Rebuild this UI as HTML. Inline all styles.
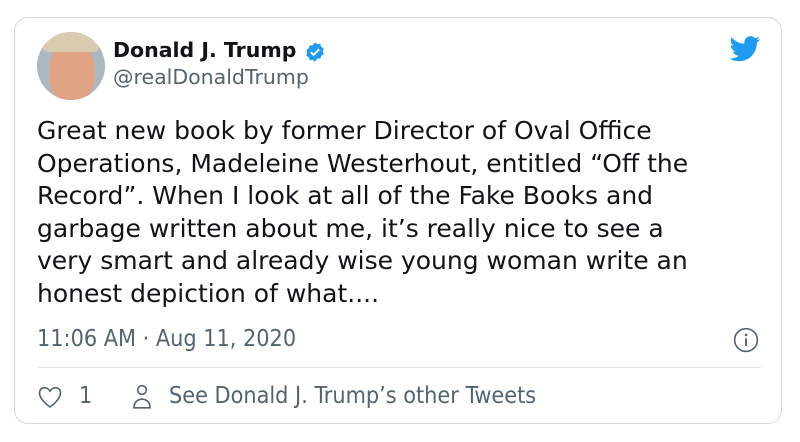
<!DOCTYPE html>
<html><head><style>
body{margin:0;width:800px;height:442px;background:#fff;font-family:"DejaVu Sans","Liberation Sans",sans-serif;position:relative;overflow:hidden}
.card{position:absolute;left:14px;top:17px;width:768px;height:407px;border:1px solid #cfd9de;border-radius:14px;box-sizing:border-box}
.av{position:absolute;left:37px;top:32px;width:68px;height:68px;border-radius:50%;overflow:hidden;background:#aab8c2}
.face{position:absolute;left:12px;top:10px;width:46px;height:62px;border-radius:45%;background:#e0a383}
.hair{position:absolute;left:6px;top:0;width:56px;height:20px;border-radius:20px 30px 10px 10px;background:#d9cbb0}
.name{position:absolute;left:113px;top:38px;font-weight:bold;font-size:20.5px;color:#0f1419}
.handle{position:absolute;left:113px;top:65px;font-size:20.5px;color:#536471}
.text{position:absolute;left:37px;top:115px;font-size:25px;line-height:32.5px;color:#0f1419;width:760px;white-space:nowrap}
.cond{font-family:"DejaVu Sans Condensed","DejaVu Sans",sans-serif}
.time{position:absolute;left:37px;top:325px;font-size:23.2px;color:#536471}
.hr{position:absolute;left:37px;top:367px;width:724px;height:1px;background:#dfe4e7}
.foot{position:absolute;top:382px;font-size:23.2px;color:#536471}
</style></head><body>
<div class="card"></div>
<div class="av"><div class="face"></div><div class="hair"></div></div>
<div class="name">Donald J. Trump</div>
<svg style="position:absolute;left:304px;top:41px" width="22" height="22" viewBox="0 0 24 24"><path fill="#1d9bf0" d="M12 1.5l2.6 1.9 3.2-.2 1 3.1 2.7 1.8-1 3.1 1 3.1-2.7 1.8-1 3.1-3.2-.2L12 22.5l-2.6-1.9-3.2.2-1-3.1-2.7-1.8 1-3.1-1-3.1 2.7-1.8 1-3.1 3.2.2z"/><path d="M7.5 12.2l3 3 6-6.2" stroke="#fff" stroke-width="2.2" fill="none"/></svg>
<div class="handle">@realDonaldTrump</div>
<svg style="position:absolute;left:729px;top:36px" width="32" height="26" viewBox="0 0 24 20"><path fill="#1d9bf0" d="M23.6 2.4c-.9.4-1.8.6-2.8.8 1-.6 1.8-1.6 2.1-2.7-.9.6-2 1-3.1 1.2C18.9.7 17.6.1 16.3.1c-2.7 0-4.8 2.2-4.8 4.8 0 .4 0 .8.1 1.1C7.5 5.8 4 3.9 1.6 1 1.2 1.7 1 2.6 1 3.5c0 1.7.9 3.2 2.2 4-.8 0-1.5-.2-2.2-.6v.1c0 2.3 1.7 4.3 3.9 4.7-.4.1-.8.2-1.3.2-.3 0-.6 0-.9-.1.6 1.9 2.4 3.3 4.5 3.4-1.7 1.3-3.7 2.1-6 2.1-.4 0-.8 0-1.2-.1 2.1 1.4 4.7 2.2 7.4 2.2 8.9 0 13.7-7.4 13.7-13.7v-.6c1-.7 1.8-1.5 2.5-2.5z"/></svg>
<div class="text">Great new book by former Director of Oval Office<br>Operations, Madeleine Westerhout, entitled “Off the<br>Record”. When I look at all of the Fake Books and<br>garbage written about me, it’s really nice to see a<br>very smart and already wise young woman write an<br>honest depiction of what....</div>
<div class="time cond">11:06 AM · Aug 11, 2020</div>
<svg style="position:absolute;left:733px;top:327px" width="26" height="26" viewBox="0 0 24 24"><circle cx="12" cy="12" r="10.5" fill="none" stroke="#536471" stroke-width="1.5"/><circle cx="12" cy="7.3" r="1.2" fill="#536471"/><path d="M12 10.5v7" stroke="#536471" stroke-width="1.8"/></svg>
<div class="hr"></div>
<svg style="position:absolute;left:36px;top:383px" width="28" height="28" viewBox="0 0 24 24"><path d="M12 20.5S3 14.5 3 8.5C3 5.7 5 4 7.3 4c2 0 3.5 1.2 4.7 3 1.2-1.8 2.7-3 4.7-3C19 4 21 5.7 21 8.5c0 6-9 12-9 12z" fill="none" stroke="#536471" stroke-width="1.4"/></svg>
<div class="foot cond" style="left:79px">1</div>
<svg style="position:absolute;left:129px;top:383px" width="26" height="28" viewBox="0 0 24 26"><circle cx="12" cy="6.5" r="4" fill="none" stroke="#536471" stroke-width="1.5"/><path d="M4.5 23c0-5 3.4-8 7.5-8s7.5 3 7.5 8z" fill="none" stroke="#536471" stroke-width="1.5"/></svg>
<div class="foot cond" style="left:169px">See Donald J. Trump’s other Tweets</div>
</body></html>
